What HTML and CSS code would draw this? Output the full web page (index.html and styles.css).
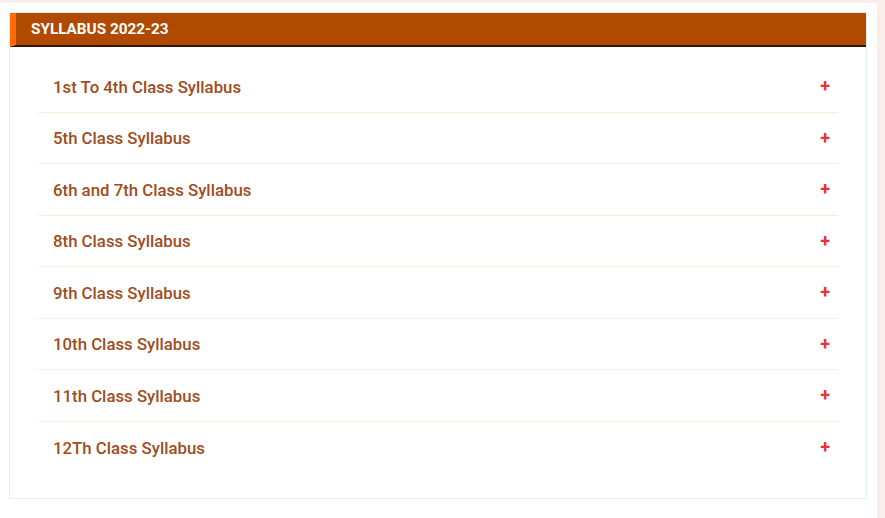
FILE: index.html
```html
<!DOCTYPE html>
<html>
<head>
<meta charset="utf-8">
<link rel="stylesheet" href="styles.css">
</head>
<body>
<div class="page">
  <div class="card">
    <div class="card-header">SYLLABUS 2022-23</div>
    <ul class="list">
      <li class="item"><span class="label">1st To 4th Class Syllabus</span><span class="plus">+</span></li>
      <li class="item"><span class="label">5th Class Syllabus</span><span class="plus">+</span></li>
      <li class="item"><span class="label">6th and 7th Class Syllabus</span><span class="plus">+</span></li>
      <li class="item"><span class="label">8th Class Syllabus</span><span class="plus">+</span></li>
      <li class="item"><span class="label">9th Class Syllabus</span><span class="plus">+</span></li>
      <li class="item"><span class="label">10th Class Syllabus</span><span class="plus">+</span></li>
      <li class="item"><span class="label">11th Class Syllabus</span><span class="plus">+</span></li>
      <li class="item last"><span class="label">12Th Class Syllabus</span><span class="plus">+</span></li>
    </ul>
  </div>
</div>
</body>
</html>
```
FILE: styles.css
```css
html, body {
  margin: 0;
  padding: 0;
}
body {
  background: #f9eeea;
  width: 885px;
  height: 518px;
  overflow: hidden;
  font-family: Roboto, "Liberation Sans", Arial, sans-serif;
}
.page {
  margin-top: 3px;
  width: 877px;
  height: 515px;
  background: #ffffff;
  box-sizing: border-box;
  padding: 9px 10px 0 9px;
}
.card {
  width: 858px;
  height: 487px;
  box-sizing: border-box;
  border: 1px solid #ebebeb;
  background: #fff;
}
.card-header {
  height: 34px;
  box-sizing: border-box;
  background: #b04a00;
  border-left: 6px solid #ff6a0a;
  border-bottom: 2px solid #2b1608;
  color: #ffffff;
  font-weight: 700;
  font-size: 15.3px;
  line-height: 32px;
  padding-left: 15px;
}
.list {
  list-style: none;
  margin: 14px 28px 0 28px;
  padding: 0;
}
.item {
  display: flex;
  justify-content: space-between;
  align-items: center;
  height: 51.5px;
  box-sizing: border-box;
  border-bottom: 1px solid #f6eedd;
  padding: 1px 8px 0 15px;
}
.item.last {
  border-bottom: none;
}
.label {
  color: #9e4d1e;
  font-size: 16.8px;
  font-weight: 500;
}
.plus {
  color: #e8323c;
  font-size: 18px;
  font-weight: 700;
  line-height: 1;
  margin-top: -1px;
}
```
